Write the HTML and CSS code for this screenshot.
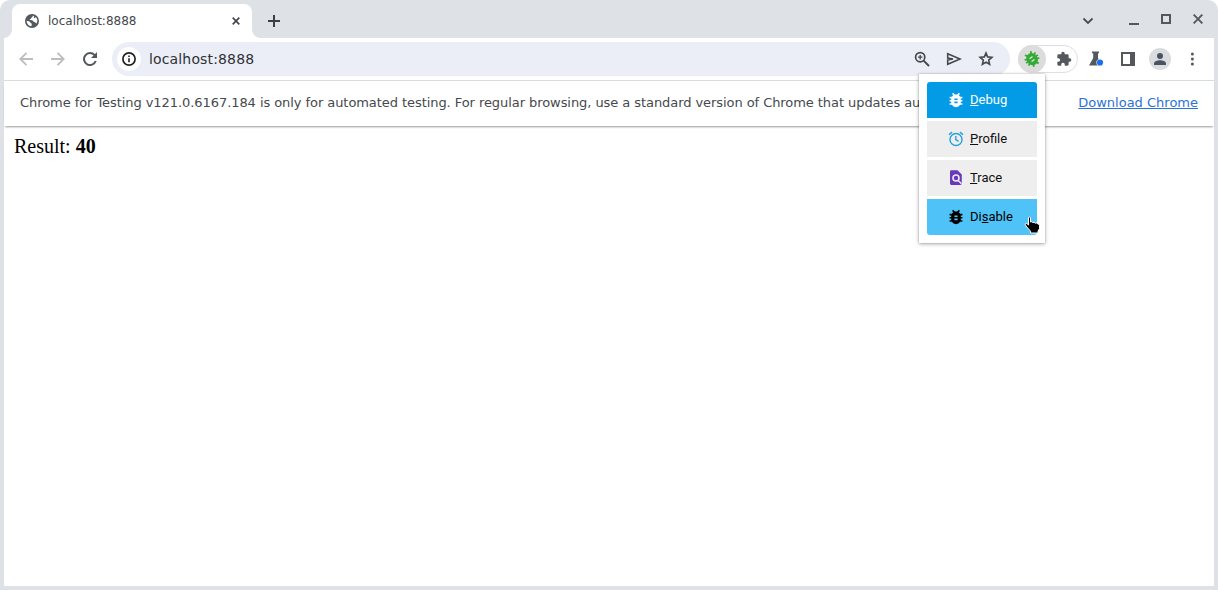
FILE: index.html
```html
<!DOCTYPE html>
<html lang="en">
<head>
<meta charset="utf-8">
<title>localhost:8888</title>
<link rel="stylesheet" href="styles.css">
</head>
<body>
<div class="window">
  <header class="tabstrip">
    <div class="tab">
      <svg class="globe" width="14" height="14" viewBox="0 0 14 14"><circle cx="7" cy="7" r="7" fill="#54585d"/><path d="M7.800 1.700C8 3 6.500 3.200 6.200 4.200C5.900 5.200 4.700 4.700 4.700 5.900C6 6.100 8.200 5.900 8.300 7.400C8.900 8 10 7.600 10.300 8.500L11.600 9.500C12.900 7 12.500 4.600 10.700 3.100C10.300 4.500 9 4.300 8.800 3.400C8.700 2.700 9.200 2.400 9.300 2.100ZM1.700 6.800C2.800 7.500 4.500 7.100 5.100 8.300C5.400 9.200 6.700 9 6.700 10.300L6.500 12.300C3.700 12.100 1.600 9.800 1.700 6.800Z" fill="#fff"/></svg>
      <span class="tab-title">localhost:8888</span>
      <svg class="tab-close" width="8" height="8" viewBox="0 0 8 8"><path d="M.7.7 7.300 7.300M7.300.7.7 7.300" stroke="#45494d" stroke-width="1.700"/></svg>
    </div>
    <svg class="new-tab" width="12" height="12" viewBox="0 0 12 12"><path d="M6 0V12M0 6H12" stroke="#3c4043" stroke-width="2"/></svg>
    <div class="window-controls">
      <svg width="12" height="12" viewBox="0 0 12 12"><path d="M1.500 4.500 6 9 10.500 4.500" fill="none" stroke="#484c50" stroke-width="1.800"/></svg>
      <svg class="minimize" width="10" height="12" viewBox="0 0 10 12"><path d="M0 10H10" stroke="#54585d" stroke-width="2"/></svg>
      <svg class="maximize" width="10" height="10" viewBox="0 0 10 10"><path d="M1 1H9V9H1Z" fill="none" stroke="#54585d" stroke-width="2"/></svg>
      <svg class="close" width="10" height="10" viewBox="0 0 10 10"><path d="M.6.6 9.400 9.400M9.400.6.6 9.400" stroke="#54585d" stroke-width="1.900"/></svg>
    </div>
  </header>

  <nav class="toolbar">
    <div class="nav-buttons">
      <svg width="14" height="14" viewBox="0 0 14 14"><path d="M14 7H1.500M7.500.8 1.300 7l6.200 6.200" fill="none" stroke="#bdbdbd" stroke-width="1.800"/></svg>
      <svg width="14" height="14" viewBox="0 0 14 14"><path d="M0 7H12.500M6.500.8 12.700 7l-6.200 6.200" fill="none" stroke="#bdbdbd" stroke-width="1.800"/></svg>
      <svg width="14" height="14" viewBox="0 0 14 14"><path d="M12.700 9A6 6 0 1 1 11.500 3" fill="none" stroke="#54585d" stroke-width="2"/><path d="M14 0V6H8Z" fill="#54585d"/></svg>
    </div>
    <div class="omnibox">
      <span class="site-info"><svg width="14" height="14" viewBox="0 0 14 14"><circle cx="7" cy="7" r="6.100" fill="none" stroke="#202124" stroke-width="1.700"/><path d="M7 6.200V10.300M7 3.600V5.100" stroke="#202124" stroke-width="1.600"/></svg></span>
      <span class="url">localhost:8888</span>
      <div class="omnibox-actions">
        <svg width="16" height="16" viewBox="0 0 16 16"><circle cx="6.200" cy="6.200" r="4.600" fill="none" stroke="#45494d" stroke-width="1.700"/><path d="M9.600 9.600 15 15" stroke="#45494d" stroke-width="2"/><path d="M6.200 4V8.400M4 6.200H8.400" stroke="#45494d" stroke-width="1.300"/></svg>
        <svg width="16" height="16" viewBox="0 0 16 16"><path d="M1.700 2.700 14 8 1.700 13.300V9L7 8 1.700 7Z" fill="none" stroke="#45494d" stroke-width="1.600"/></svg>
        <svg width="16" height="16" viewBox="0 0 16 16"><path d="M8 2 9.600 5.900 13.900 6.300 10.700 9.100 11.600 13.300 8 11.100 4.400 13.300 5.300 9.100 2.100 6.300 6.400 5.900Z" fill="none" stroke="#45494d" stroke-width="1.600"/></svg>
      </div>
    </div>
    <div class="extensions">
      <span class="extension-active"><svg width="18" height="18" viewBox="0 0 18 18"><g transform="rotate(-35 9 9)"><path d="M2.500 5.500 15.500 12.500M2.500 12.500 15.500 5.500M1.800 9H16.200M5.500 1.800 7.500 6M12.500 1.800 10.500 6M7 14 6.200 16.500M11 14 11.800 16.500" stroke="#35a936" stroke-width="1.700"/><ellipse cx="9" cy="9.200" rx="5.600" ry="6.300" fill="#35a936"/><path d="M7.200 7.300H10.800M7.200 10.800H10.800" stroke="#d8efd9" stroke-width="1.200"/></g></svg></span>
      <svg width="16" height="16" viewBox="0 0 24 24"><path d="M20.500 11H19V7c0-1.100-.9-2-2-2h-4V3.500a2.500 2.500 0 0 0-5 0V5H4a2 2 0 0 0-2 2v3.800h1.500a2.700 2.700 0 0 1 0 5.400H2V20c0 1.100.9 2 2 2h3.800v-1.500a2.700 2.700 0 0 1 5.400 0V22H17c1.100 0 2-.9 2-2v-4h1.500a2.500 2.500 0 0 0 0-5Z" fill="#54585d"/></svg>
    </div>
    <div class="toolbar-actions">
      <svg width="16" height="16" viewBox="0 0 16 16"><path d="M4 .5H11V2.200H10V7L14 14.500H1L5.200 7V2.200H4Z" fill="#54585d"/><circle cx="12" cy="11.500" r="3.600" fill="#fff"/><circle cx="12" cy="11.500" r="3.100" fill="#1a6ef0"/></svg>
      <svg width="14" height="14" viewBox="0 0 14 14"><path d="M0 0H14V14H0ZM2 2V12H9V2Z" fill="#54585d" fill-rule="evenodd"/></svg>
      <svg width="22" height="22" viewBox="0 0 22 22"><circle cx="11" cy="11" r="11" fill="#dadce0"/><circle cx="11" cy="8" r="3" fill="#4a5460"/><path d="M5 17V15.500C5 13.500 8.500 12.300 11 12.300S17 13.500 17 15.500V17Z" fill="#4a5460"/></svg>
      <svg width="4" height="14" viewBox="0 0 4 14"><g fill="#54585d"><circle cx="2.400" cy="2" r="1.500"/><circle cx="2.400" cy="7" r="1.500"/><circle cx="2.400" cy="12" r="1.500"/></g></svg>
    </div>
  </nav>

  <div class="infobar">
    <span class="notice">Chrome for Testing v121.0.6167.184 is only for automated testing. For regular browsing, use a standard version of Chrome that updates au</span>
    <a class="download">Download Chrome</a>
  </div>
  <main class="page">Result: <b>40</b></main>
</div>

<div class="popup">
  <div class="item debug">
    <svg width="16" height="16" viewBox="2 2 20 20"><path class="bug" d="M20 8h-2.800a6 6 0 0 0-1.800-2L17 4.400 15.600 3l-2.200 2.200a6 6 0 0 0-2.800 0L8.400 3 7 4.400 8.600 6a6 6 0 0 0-1.800 2H4v2h2.100L6 11v1H4v2h2v1l.1 1H4v2h2.800a6 6 0 0 0 10.400 0H20v-2h-2.100l.1-1v-1h2v-2h-2v-1l-.1-1H20Zm-6 8h-4v-2h4Zm0-4h-4v-2h4Z"/></svg>
    <span><u>D</u>ebug</span>
  </div>
  <div class="item">
    <svg width="16" height="16" viewBox="0 0 16 16"><g fill="none" stroke="#29a0da" stroke-width="1.400"><circle cx="8" cy="8.500" r="6"/><path d="M.9 3.800 4.100 1.100M15.100 3.800 11.900 1.100M7.800 5V8.700L10.600 10.400"/></g></svg>
    <span><u>P</u>rofile</span>
  </div>
  <div class="item">
    <svg width="16" height="16" viewBox="0 0 16 16"><path d="M3.300.3H9.500L13.800 4.500V13.600Q13.800 15 12.400 15H3.300Q2 15 2 13.600V1.600Q2 .3 3.300.3Z" fill="#673ab7"/><circle cx="8" cy="8" r="3" fill="none" stroke="#f0eaf8" stroke-width="1.600"/><path d="M10 10.200 13.500 13.700" stroke="#f0eaf8" stroke-width="1.500"/></svg>
    <span><u>T</u>race</span>
  </div>
  <div class="item disable">
    <svg width="16" height="16" viewBox="2 2 20 20"><path class="bug" d="M20 8h-2.800a6 6 0 0 0-1.800-2L17 4.400 15.600 3l-2.200 2.200a6 6 0 0 0-2.800 0L8.400 3 7 4.400 8.600 6a6 6 0 0 0-1.800 2H4v2h2.100L6 11v1H4v2h2v1l.1 1H4v2h2.800a6 6 0 0 0 10.400 0H20v-2h-2.100l.1-1v-1h2v-2h-2v-1l-.1-1H20Zm-6 8h-4v-2h4Zm0-4h-4v-2h4Z"/></svg>
    <span>Di<u>s</u>able</span>
  </div>
</div>
<svg class="cursor" width="18" height="18" viewBox="0 0 18 18"><path d="M4.500 1.500Q5.500.5 6.500 1.500V6Q7.700 5.300 8.700 6.500Q10.200 5.800 11.300 7.200Q12.800 6.500 13.800 7.900Q15.500 7.800 15.500 9.500V12.500L14 15.200V17H6.500V15.200L2.800 11L1.300 8.800Q1 7.200 2.700 7.400L4.500 9Z" fill="#000" stroke="#fff" stroke-width="1"/></svg>
</body>
</html>
```

FILE: styles.css
```css
* { box-sizing: border-box; }
body { margin: 0; background: #fff; font-family: "DejaVu Sans", sans-serif; overflow: hidden; }
svg { display: block; flex: none; }

.window {
  height: 590px;
  padding: 0 4px 4px;
  background: #dee1e6;
  border-radius: 10px 10px 0 0;
  display: flex;
  flex-direction: column;
}

.tabstrip { height: 38px; padding: 4px 11px 0 8px; display: flex; align-items: center; }
.tab {
  position: relative;
  width: 240px;
  height: 34px;
  padding: 0 12px 0 13px;
  display: flex;
  align-items: center;
  background: #fff;
  border-radius: 8px 8px 0 0;
}
.tab::before, .tab::after {
  content: "";
  position: absolute;
  bottom: 0;
  width: 8px;
  height: 8px;
}
.tab::before { left: -8px; background: radial-gradient(circle at 0 0, #dee1e6 7.500px, #fff 8px); }
.tab::after { right: -8px; background: radial-gradient(circle at 100% 0, #dee1e6 7.500px, #fff 8px); }
.tab-title { margin-left: 9px; flex: 1; font-size: 12px; line-height: 16px; color: #45494d; }
.new-tab { margin-left: 16px; }
.window-controls { margin: -2px 0 0 auto; display: flex; align-items: center; }
.minimize { margin: 0 0 0 35px; }
.maximize { margin: -3px 0 0 22px; }
.close { margin: -3px 0 0 22px; }

.toolbar { height: 43px; padding-left: 15px; display: flex; align-items: center; background: #fff; border-bottom: 1px solid #d9dbde; }
.nav-buttons { display: flex; gap: 18px; margin-top: -1px; }
.omnibox { width: 898px; height: 34px; margin-left: 15px; padding: 0 16px 0 5px; display: flex; align-items: center; border-radius: 17px; background: #ebeef7; }
.site-info { width: 24px; height: 24px; display: flex; align-items: center; justify-content: center; border-radius: 50%; background: #fff; }
.url { margin-left: 8px; font-size: 14px; letter-spacing: .15px; color: #303134; }
.omnibox-actions { margin-left: auto; display: flex; gap: 16px; }
.extensions { width: 60px; height: 28px; margin-left: 8px; display: flex; align-items: center; gap: 10px; border: 1px solid #dddfe2; border-radius: 14px; }
.extension-active { width: 28px; height: 28px; margin-left: -1px; display: flex; align-items: center; justify-content: center; border-radius: 50%; background: #dcdcdd; }
.toolbar-actions { margin-left: 10px; display: flex; align-items: center; }
.toolbar-actions svg:nth-child(2) { margin-left: 17px; }
.toolbar-actions svg:nth-child(3) { margin-left: 14px; }
.toolbar-actions svg:nth-child(4) { margin-left: 19px; }

.infobar { height: 45px; padding: 0 16px 2px; display: flex; align-items: center; background: #fff; font-size: 13px; color: #45494d; white-space: nowrap; z-index: 1; box-shadow: 0 2px 2px -1px #0006; }
.notice { width: 899px; overflow: hidden; letter-spacing: -.065px; }
.download { margin-left: auto; color: #2b72d9; text-decoration: underline; }
.page { flex: 1; padding: 8px 10px; background: #fff; color: #000; font: 20px/24px "Liberation Serif", serif; }

.popup {
  position: absolute;
  z-index: 2;
  left: 919px;
  top: 74px;
  width: 126px;
  height: 169px;
  padding: 8px;
  display: flex;
  flex-direction: column;
  gap: 3px;
  background: #fff;
  box-shadow: 0 0 1px #0005, 0 1px 4px #0005;
}
.item { height: 36px; padding-left: 21px; display: flex; align-items: center; gap: 6px; background: #eee; color: #111; font: 13px/16px Roboto, sans-serif; }
.item u { text-underline-offset: 1px; }
.debug { background: #039be5; color: #fff; border-radius: 3px 3px 0 0; }
.disable { background: #4fc3f7; color: #000; border-radius: 0 0 3px 3px; }
.bug { fill: currentColor; }
.cursor { position: absolute; z-index: 3; left: 1024px; top: 216px; }
```
